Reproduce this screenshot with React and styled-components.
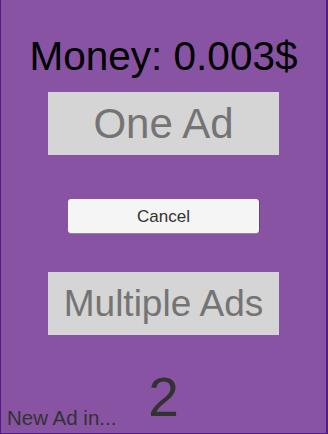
import React from 'react';
import styled, { createGlobalStyle } from 'styled-components';

const GlobalStyle = createGlobalStyle`
  html, body {
    margin: 0;
    padding: 0;
    background: #8853a3;
  }
  * {
    box-sizing: border-box;
  }
`;

const Screen = styled.div`
  width: 328px;
  height: 434px;
  display: flex;
  flex-direction: column;
  align-items: center;
  padding-top: 36px;
  background: #8853a3;
  border-left: 1px solid #561a86;
  border-right: 2px solid #561a86;
  border-bottom: 1px solid #561a86;
  font-family: "Liberation Sans", Arial, sans-serif;
`;

const Money = styled.div`
  font-size: 40.5px;
  line-height: 40px;
  height: 40px;
  color: #000;
  white-space: nowrap;
`;

const BigButton = styled.button`
  width: 231px;
  height: 63px;
  margin-top: ${(p) => p.$top}px;
  border: none;
  padding: 0;
  background: #d5d5d5;
  color: #747474;
  font-family: inherit;
  font-size: ${(p) => p.$size}px;
  line-height: 1;
  cursor: pointer;
  white-space: nowrap;
`;

const CancelButton = styled.button`
  width: 191px;
  height: 34px;
  margin-top: 44px;
  padding: 0;
  border: none;
  border-radius: 3px;
  background: #f5f5f5;
  box-shadow: 0 1px 0 #8a8a8a, 1px 0 0 rgba(0, 0, 0, 0.2);
  color: #323232;
  font-family: inherit;
  font-size: 17px;
  line-height: 1;
  cursor: pointer;
`;

const Footer = styled.div`
  margin-top: auto;
  width: 100%;
  display: grid;
  grid-template-columns: 1fr auto 1fr;
  align-items: end;
  padding: 0 6px 5px;
  color: #323232;
`;

const Hint = styled.span`
  justify-self: start;
  font-size: 20.5px;
  line-height: 20px;
  white-space: nowrap;
`;

const Countdown = styled.span`
  grid-column: 2;
  font-size: 55px;
  line-height: 54px;
  margin-bottom: 4px;
`;

export default function App() {
  return (
    <>
      <GlobalStyle />
      <Screen>
        <Money>Money: 0.003$</Money>
        <BigButton $top={16} $size={42}>One Ad</BigButton>
        <CancelButton>Cancel</CancelButton>
        <BigButton $top={39} $size={37}>Multiple Ads</BigButton>
        <Footer>
          <Hint>New Ad in...</Hint>
          <Countdown>2</Countdown>
        </Footer>
      </Screen>
    </>
  );
}
